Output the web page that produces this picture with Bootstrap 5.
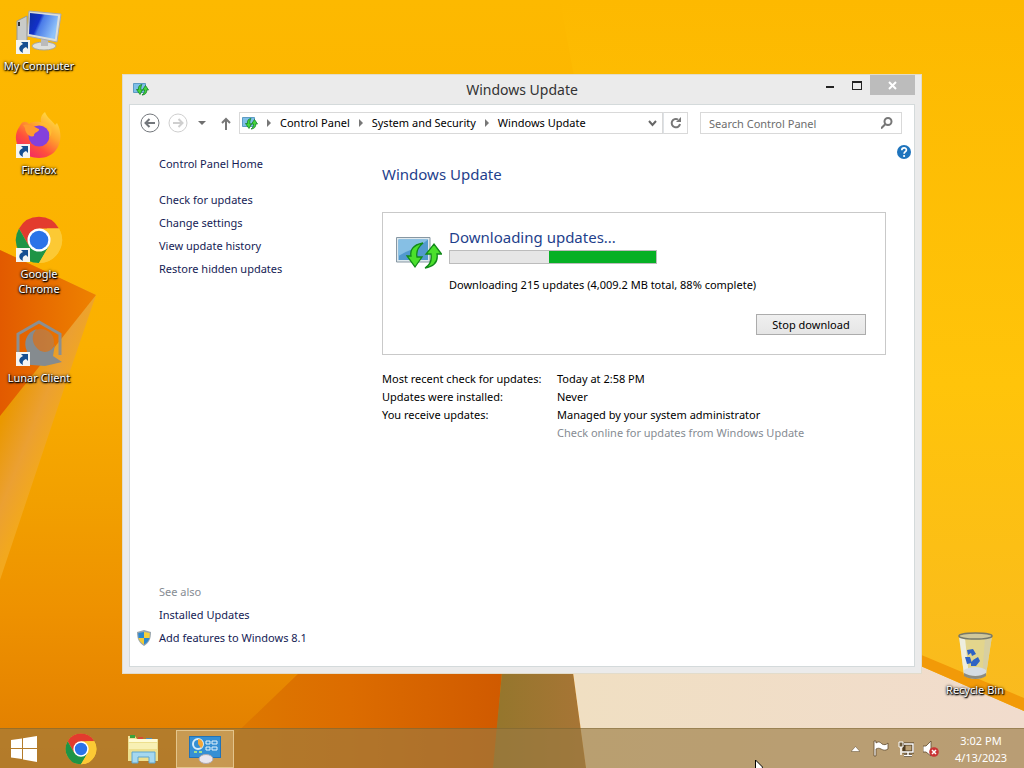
<!DOCTYPE html>
<html lang="en">
<head>
<meta charset="utf-8">
<meta name="viewport" content="width=device-width, initial-scale=1">
<title>Windows Update</title>
<link href="https://cdn.jsdelivr.net/npm/bootstrap@5.3.0/dist/css/bootstrap.min.css" rel="stylesheet">
<style>
  body { font-family: "Noto Sans", "Open Sans", sans-serif; font-size: 11px; line-height: 18px; color: #000; background: #f5a800; }
  a { text-decoration: none; color: #151c55; }
  a:hover { text-decoration: underline; }
  svg { display: block; flex: none; }
  .desktop { min-height: 100vh; overflow: hidden; }
  .wallpaper { position: absolute; inset: 0; width: 100%; height: 100%; }
  .shortcuts { width: 78px; padding-top: 8px; }
  .shortcut { height: 104px; line-height: 15px; color: #fff; text-shadow: 1px 1px 1px #000, 0 1px 2px #000, 0 0 3px #000; }
  .shortcut svg { margin-bottom: 2px; }
  .shortcut, .shortcut:hover { color: #fff; }
  .bin { position: absolute; right: 9px; bottom: 0; width: 80px; height: 96px; }
  .win { position: absolute; left: 122px; top: 74px; right: 102px; bottom: 54px; background: #ebebeb; border: 1px solid #e2dccb; padding: 0 6px 6px; }
  .titlebar { height: 29px; }
  .titlebar h1 { font-size: 14px; font-weight: 400; line-height: 29px; color: #333; padding-right: 20px; }
  .winbtn { border: 0; background: none; padding: 0; height: 20px; width: 27px; }
  .winbtn-close { width: 45px; background: #bcbcbc; }
  .pane { background: #fff; border: 1px solid #d4dadb; }
  .toolbar { height: 36px; padding: 0 12px 0 10px; }
  .plainbtn { border: 0; padding: 0; background: none; }
  .recent { margin: 0 14px 0 9px; }
  .address { border: 1px solid #d9d9d9; height: 22px; padding: 0 5px 0 2px; }
  .address a { color: #000; white-space: nowrap; }
  .crumb-arrow { margin: 0 8px 0 9px; }
  .refresh { border: 1px solid #d9d9d9; border-left: 0; height: 22px; width: 25px; background: #fff; }
  .searchbox { border: 1px solid #d9d9d9; height: 22px; width: 202px; margin-left: 12px; }
  .searchbox input { border: 0; outline: 0; padding: 0 0 0 8px; width: 170px; height: 20px; color: #6d6d6d; }
  .searchbox input::placeholder { color: #6d6d6d; opacity: 1; }
  .side { width: 252px; padding: 14px 0 19px 29px; }
  .side a, .side span { display: block; margin-bottom: 5px; }
  .side .home { margin-bottom: 18px; }
  .side .shielded { margin: 0 0 0 -22px; }
  .help { position: absolute; right: 3px; top: 4px; }
  .main-col { padding: 22px 28px 0 0; }
  .main-col h2, .main-col h3 { font-size: 15px; font-weight: 400; line-height: 22px; color: #1f3f8c; }
  .status { border: 1px solid #c9c9c9; margin-top: 27px; padding: 13px 19px 19px 13px; }
  .status-icon { margin-top: 10px; }
  .status-text { padding-left: 7px; }
  .bar { width: 208px; height: 14px; margin-top: 2px; background: #e6e6e6; border: 1px solid #bcbcbc; border-radius: 0; }
  .bar .progress-bar { background: #06b025; }
  .stop { height: 21px; width: 110px; border: 1px solid #acacac; background: linear-gradient(#f0f0f0, #e5e5e5); padding: 0; line-height: 18px; }
  .facts { margin-top: 15px; }
  .facts th { font-weight: 400; width: 175px; }
  .facts th, .facts td { padding: 0; white-space: nowrap; }
  .facts a, .dim { color: #868c93; }
  .taskbar { height: 40px; background: rgba(153, 122, 65, .64); border-top: 1px solid rgba(110, 90, 40, .4); position: relative; }
  .task { border: 1px solid transparent; background: none; width: 58px; height: 38px; padding: 0; margin-right: 4px; }
  .task-start { width: 48px; margin-right: 4px; }
  .task-open { background: rgba(225, 190, 130, .45); border-color: rgba(240, 215, 165, .7); }
  .tray { padding-right: 15px; gap: 9px; }
  .clock { color: #fff; line-height: 17px; width: 56px; margin-left: 5px; }
  .pointer { position: absolute; left: 755px; bottom: 0; }
</style>
</head>
<body>
<div class="desktop d-flex flex-column position-relative">

  <svg class="wallpaper" viewBox="0 0 1024 768" preserveAspectRatio="none" aria-hidden="true">
    <defs>
      <linearGradient id="sky" x1="0" y1="0" x2="0" y2="1"><stop offset="0" stop-color="#fdb900"/><stop offset=".45" stop-color="#fbb000"/><stop offset=".65" stop-color="#f2a000"/><stop offset=".8" stop-color="#ee9100"/><stop offset="1" stop-color="#e07c00"/></linearGradient>
      <linearGradient id="rightSky" x1="0" y1="0" x2="0" y2="1"><stop offset="0" stop-color="#fdb900"/><stop offset=".5" stop-color="#ffc40a"/><stop offset="1" stop-color="#f8b824"/></linearGradient>
      <linearGradient id="flap" x1="0" y1="0" x2="1" y2="0"><stop offset="0" stop-color="#e25a00"/><stop offset="1" stop-color="#ee8200"/></linearGradient>
      <linearGradient id="fold" gradientUnits="userSpaceOnUse" x1="5" y1="410" x2="55" y2="430"><stop offset="0" stop-color="#ea9800"/><stop offset=".6" stop-color="#eba032"/><stop offset="1" stop-color="#f2a81e"/></linearGradient>
      <linearGradient id="ember" x1="0" y1="0" x2="1" y2="0"><stop offset="0" stop-color="#de7c00"/><stop offset=".5" stop-color="#dc6c00"/><stop offset="1" stop-color="#d05a00"/></linearGradient>
      <linearGradient id="olive" x1="0" y1="0" x2="1" y2="0"><stop offset="0" stop-color="#94762c"/><stop offset="1" stop-color="#a87536"/></linearGradient>
      <linearGradient id="sand" x1="0" y1="0" x2="1" y2="0"><stop offset="0" stop-color="#f0dfc2"/><stop offset="1" stop-color="#f1dccd"/></linearGradient>
    </defs>
    <rect width="1024" height="768" fill="url(#sky)"/>
    <path d="M560 0H1024V768H700Z" fill="url(#rightSky)"/>
    <path d="M0 250L96 295L65 386L0 580Z" fill="url(#fold)"/>
    <path d="M0 250L96 295L0 416Z" fill="url(#flap)"/>
    <path d="M300 672H502L494 768H200Z" fill="url(#ember)"/>
    <path d="M502 672H573L586 768H493Z" fill="url(#olive)"/>
    <path d="M573 672L700 657H900L1024 711V768H586Z" fill="url(#sand)"/>
    <path d="M900 646L1024 698V711L900 657Z" fill="#f29a08"/>
  </svg>

  <svg width="0" height="0" class="position-absolute" aria-hidden="true">
    <defs>
      <symbol id="arrow" viewBox="0 0 14 14"><path d="M0 0H14V14H0Z" fill="#f5f5f2"/><path d="M5 2H12V9L10 7C7 8 6 10 7 13C2 11 2 6 7 4Z" fill="#174f91"/></symbol>
      <symbol id="chrome" viewBox="0 0 48 48"><circle cx="24" cy="24" r="23" fill="#fcc934"/><path d="M4 12.500A23 23 0 0 1 44 12.500H24L14 30Z" fill="#e33b2e"/><path d="M4 12.500L14 30L24 35L34 30L24 47A23 23 0 0 1 4 12.500Z" fill="#1e9446"/><path d="M44 12.500A23 23 0 0 1 24 47L34 30L32 12.500Z" fill="#fcc934"/><circle cx="24" cy="24" r="11.500" fill="#fff"/><circle cx="24" cy="24" r="9.300" fill="#2b73e8"/></symbol>
      <symbol id="update" viewBox="0 0 46 34"><path d="M.5 1.500H34V26H.5Z" fill="#dfe9ee" stroke="#8797a3"/><path d="M2.500 3.500H32V24H2.500Z" fill="#5299cf"/><path d="M2.500 3.500H32C22 12 12 14 2.500 20Z" fill="#86bfe4"/><path d="M27 7C16 9 14 15 15 20H11L19 31L26 21H21C20 16 22 11 27 7Z" fill="#4be02c" stroke="#128a1a" stroke-width="1.300"/><path d="M29 32C40 30 42 24 41 18H45.500L38 8L30 18H35C36 24 34 29 29 32Z" fill="#4be02c" stroke="#128a1a" stroke-width="1.300"/></symbol>
      <symbol id="update-small" viewBox="0 0 16 13"><path d="M.5 .5H12.500V9.500H.5Z" fill="#7fbfe8" stroke="#5d9cc4"/><path d="M9 1.500C6 2 5 4 5.500 6.500H3.500L7 11.500L9.500 7H8C7.500 5 8 3 9 1.500Z" fill="#43d63a" stroke="#14802a" stroke-width=".8"/><path d="M9 12C12.500 12 14 9.500 13.700 7H15.500L12.500 2.500L9.500 7H11.500C11.500 9 11 11 9 12Z" fill="#43d63a" stroke="#14802a" stroke-width=".8"/></symbol>
    </defs>
  </svg>

  <main class="flex-grow-1 position-relative">
    <nav class="shortcuts d-flex flex-column" aria-label="Desktop">
      <a href="#" class="shortcut d-flex flex-column align-items-center text-center">
        <svg width="48" height="48" viewBox="0 0 48 48"><defs><linearGradient id="scr" x1="0" y1="0" x2="1" y2=".4"><stop offset="0" stop-color="#0c2ea0"/><stop offset=".4" stop-color="#1230c8"/><stop offset=".5" stop-color="#4a7be8"/><stop offset="1" stop-color="#8fc2fa"/></linearGradient></defs><path d="M2 13L12 8V38L2 33Z" fill="#c9cbc8" stroke="#989a94"/><path d="M3 14H5V18H3Z" fill="#333"/><ellipse cx="29" cy="38" rx="12" ry="4" fill="#dfe0dc" stroke="#a8a79c"/><path d="M26 30H33V38H26Z" fill="#bbb"/><path d="M14 3L46 6L42 34L12 28Z" fill="#dcdeda" stroke="#aaa"/><path d="M15 5L43 8L40 31L14 26Z" fill="url(#scr)"/><use href="#arrow" x="1" y="32" width="14" height="14"/></svg>
        <span>My Computer</span>
      </a>
      <a href="#" class="shortcut d-flex flex-column align-items-center text-center">
        <svg width="48" height="48" viewBox="0 0 48 48"><defs><linearGradient id="fx" x1=".9" y1="0" x2=".2" y2="1"><stop offset="0" stop-color="#ffe94a"/><stop offset=".4" stop-color="#ffa52c"/><stop offset=".7" stop-color="#ff4f3c"/><stop offset="1" stop-color="#ef2070"/></linearGradient></defs><path d="M6 12C8 9 12 9 14 12C18 9 22 10 26 10C25 6 27 2 30 0C32 6 38 9 40 13L42 11C50 25 44 46 24 46C7 46-4 30 3 17Z" fill="url(#fx)"/><circle cx="24" cy="24" r="10.500" fill="#8440dc"/><path d="M8 13C14 11 20 15 24 17C25 20 18 20 19 24C14 26 10 20 10 16Z" fill="#ff9a2e"/><path d="M22 13C31 11 37 17 34 26C39 19 37 12 29 10Z" fill="#ffbd32"/><use href="#arrow" x="1" y="32" width="14" height="14"/></svg>
        <span>Firefox</span>
      </a>
      <a href="#" class="shortcut d-flex flex-column align-items-center text-center">
        <svg width="48" height="48" viewBox="0 0 48 48"><use href="#chrome" width="48" height="48"/><use href="#arrow" x="1" y="32" width="14" height="14"/></svg>
        <span>Google<br>Chrome</span>
      </a>
      <a href="#" class="shortcut d-flex flex-column align-items-center text-center">
        <svg width="48" height="48" viewBox="0 0 48 48"><path d="M3 36V14L24 2L45 14V35" fill="none" stroke="#8b8f91" stroke-width="3"/><circle cx="26" cy="22" r="13" fill="#8b8f91" opacity=".4"/><path d="M22 9C11 12 8 23 12 31L10 37L4 44L30 46L47 42L38 36L40 24C36 34 26 34 21 27C16 21 17 13 22 9Z" fill="#858b8f"/><use href="#arrow" x="1" y="32" width="14" height="14"/></svg>
        <span>Lunar Client</span>
      </a>
    </nav>

    <a href="#" class="shortcut bin d-flex flex-column align-items-center text-center">
      <svg width="48" height="48" viewBox="0 0 48 48"><path d="M8 4L13 43C19 48 30 48 35 43L41 4Z" fill="#e3d58c"/><path d="M8 4L13 43L18 45L14 6Z" fill="#eeeede"/><path d="M34 6L31 45L35 43L41 4Z" fill="#d7cfa2"/><path d="M13 38C19 34 30 34 35 38V43C30 48 19 48 13 43Z" fill="#d5dce3"/><path d="M13 41C20 45 29 45 35 41V44C30 48 19 48 13 44Z" fill="#8c8b80"/><ellipse cx="24.500" cy="4" rx="16.500" ry="3" fill="#cfc79c" stroke="#77796a" stroke-width="1.500"/><path d="M16 18L22 17L25 22L21 24L20 21L17 23ZM14 25L19 25L21 31L16 32ZM22 28L27 25L29 29L25 34L20 34L20 31Z" fill="#2f63c4"/></svg>
      <span>Recycle Bin</span>
    </a>

    <section class="win d-flex flex-column" aria-label="Windows Update">
      <header class="titlebar position-relative d-flex">
        <svg class="mt-2 ms-1" width="16" height="13"><use href="#update-small" width="16" height="13"/></svg>
        <h1 class="flex-grow-1 text-center mb-0">Windows Update</h1>
        <div class="d-flex position-absolute end-0 top-0">
          <button type="button" class="winbtn" aria-label="Minimize"><svg class="mx-auto" width="10" height="10"><path d="M1 6H9V8H1Z" fill="#222"/></svg></button>
          <button type="button" class="winbtn" aria-label="Maximize"><svg class="mx-auto" width="10" height="9"><path d="M0 0H10V9H0ZM1 2V8H9V2Z" fill="#222" fill-rule="evenodd"/></svg></button>
          <button type="button" class="winbtn winbtn-close" aria-label="Close"><svg class="mx-auto" width="9" height="9"><path d="M1 1L8 8M8 1L1 8" stroke="#fff" stroke-width="2"/></svg></button>
        </div>
      </header>

      <div class="pane flex-grow-1 d-flex flex-column">
        <div class="toolbar d-flex align-items-center">
          <button type="button" class="plainbtn me-2" aria-label="Back"><svg width="20" height="20" viewBox="0 0 20 20" fill="none" stroke="#73777c"><circle cx="10" cy="10" r="9"/><path d="M15 10H6M9.500 6L5.500 10L9.500 14" stroke-width="2"/></svg></button>
          <button type="button" class="plainbtn" aria-label="Forward"><svg width="20" height="20" viewBox="0 0 20 20" fill="none" stroke="#cfcfcf"><circle cx="10" cy="10" r="9"/><path d="M5 10H14M10.500 6L14.500 10L10.500 14" stroke-width="2"/></svg></button>
          <button type="button" class="plainbtn recent" aria-label="Recent locations"><svg width="10" height="6"><path d="M1 1H9L5 5Z" fill="#6f6f6f"/></svg></button>
          <button type="button" class="plainbtn me-2" aria-label="Up"><svg width="10" height="13" fill="none" stroke="#777" stroke-width="2"><path d="M5 13V2M1 6L5 2L9 6"/></svg></button>
          <nav class="address flex-grow-1 d-flex align-items-center" aria-label="Address">
            <svg width="16" height="13"><use href="#update-small" width="16" height="13"/></svg>
            <svg class="crumb-arrow" width="5" height="8"><path d="M0 0L4 4L0 8Z" fill="#777"/></svg>
            <a href="#">Control Panel</a>
            <svg class="crumb-arrow" width="5" height="8"><path d="M0 0L4 4L0 8Z" fill="#777"/></svg>
            <a href="#">System and Security</a>
            <svg class="crumb-arrow" width="5" height="8"><path d="M0 0L4 4L0 8Z" fill="#777"/></svg>
            <a href="#">Windows Update</a>
            <button type="button" class="plainbtn ms-auto" aria-label="Previous locations"><svg width="9" height="7"><path d="M1 1L4.500 5L8 1" fill="none" stroke="#666" stroke-width="2"/></svg></button>
          </nav>
          <button type="button" class="refresh p-0 border-start" aria-label="Refresh"><svg class="mx-auto" width="12" height="12" fill="none" stroke="#777" stroke-width="2"><path d="M8 2.500A4.200 4.200 0 1 0 10 7"/><path d="M11 0V5H6Z" fill="#777" stroke="none"/></svg></button>
          <div class="searchbox d-flex align-items-center">
            <input type="text" placeholder="Search Control Panel" aria-label="Search Control Panel">
            <svg class="ms-auto me-2" width="12" height="12" fill="none" stroke="#777" stroke-width="2"><circle cx="7" cy="4.500" r="3.500"/><path d="M4.500 7L0 11.500"/></svg>
          </div>
        </div>

        <div class="flex-grow-1 d-flex position-relative">
          <nav class="side flex-shrink-0 d-flex flex-column" aria-label="Tasks">
            <a href="#" class="home">Control Panel Home</a>
            <a href="#">Check for updates</a>
            <a href="#">Change settings</a>
            <a href="#">View update history</a>
            <a href="#">Restore hidden updates</a>
            <span class="dim mt-auto">See also</span>
            <a href="#">Installed Updates</a>
            <a href="#" class="shielded d-flex align-items-center">
              <svg class="me-2" width="14" height="16" viewBox="0 0 14 16"><path d="M7 0L14 2C14 9 12 13 7 16C2 13 0 9 0 2Z" fill="#9aa6ae"/><path d="M7 2V8H1.500L1.300 3Z" fill="#2b87cf"/><path d="M7 2L12.700 3L12.500 8H7Z" fill="#f6d13c"/><path d="M1.500 8H7V14.500C3.500 12.500 2 10 1.500 8Z" fill="#f1ca35"/><path d="M7 8H12.500C12 10 10.500 12.500 7 14.500Z" fill="#2b87cf"/></svg>Add features to Windows 8.1</a>
          </nav>

          <div class="main-col flex-grow-1">
            <h2 class="mb-0">Windows Update</h2>
            <section class="status">
              <div class="d-flex">
                <svg class="status-icon" width="46" height="34"><use href="#update" width="46" height="34"/></svg>
                <div class="status-text">
                  <h3 class="mb-0">Downloading updates...</h3>
                  <div class="progress bar justify-content-end" role="progressbar" aria-label="Download progress"><div class="progress-bar" style="width:52%"></div></div>
                  <p class="mb-0 mt-2 pt-1">Downloading 215 updates (4,009.2 MB total, 88% complete)</p>
                </div>
              </div>
              <div class="text-end mt-3"><button type="button" class="stop mt-1">Stop download</button></div>
            </section>
            <table class="facts">
              <tbody>
                <tr><th scope="row">Most recent check for updates:</th><td>Today at 2:58 PM</td></tr>
                <tr><th scope="row">Updates were installed:</th><td>Never</td></tr>
                <tr><th scope="row">You receive updates:</th><td>Managed by your system administrator</td></tr>
                <tr><th></th><td><a href="#">Check online for updates from Windows Update</a></td></tr>
              </tbody>
            </table>
          </div>
          <button type="button" class="plainbtn help" aria-label="Help"><svg width="14" height="14" viewBox="0 0 14 14"><circle cx="7" cy="7" r="7" fill="#1e74bd"/><path d="M4.800 5.200C4.800 2 9.400 2.200 9.400 4.900C9.400 6.700 7.100 6.600 7.100 8.800" fill="none" stroke="#fff" stroke-width="1.700"/><circle cx="7.100" cy="11" r="1.100" fill="#fff"/></svg></button>
        </div>
      </div>
    </section>
  </main>

  <footer class="taskbar d-flex align-items-center">
    <button type="button" class="task task-start" aria-label="Start"><svg class="mx-auto" width="28" height="26" viewBox="0 0 28 26" fill="#fff"><path d="M1 4L12 2.500V12H1ZM13 2.300L27 0V12H13ZM1 13H12V23L1 21.500ZM13 13H27V26L13 23.500Z"/></svg></button>
    <button type="button" class="task" aria-label="Google Chrome"><svg class="mx-auto" width="32" height="32"><use href="#chrome" width="32" height="32"/></svg></button>
    <button type="button" class="task" aria-label="File Explorer"><svg class="mx-auto" width="32" height="32" viewBox="0 0 32 32"><path d="M1 3H8L10 6H31V28H1Z" fill="#f1e29a"/><path d="M3 2H8V5H3Z" fill="#3ba23c"/><path d="M11 4H16V7H11Z" fill="#d84c35"/><path d="M19 5H25V8H19Z" fill="#4c8fbe"/><path d="M2 6H30V9H2Z" fill="#fffbd6"/><path d="M1 9H31V28H1Z" fill="#eddf8e"/><path d="M2 10H30V16H2Z" fill="#f8f0b4"/><path d="M5 30V19H28V30H22V24H11V30Z" fill="#a6d8ef" stroke="#5fa6cf"/></svg></button>
    <button type="button" class="task task-open" aria-label="Control Panel"><svg class="mx-auto" width="32" height="30" viewBox="0 0 32 30"><path d="M0 2H32V24H0Z" fill="#2173b8"/><path d="M1 3H31V23H1Z" fill="#358fd4"/><circle cx="9" cy="10" r="5" fill="none" stroke="#d7edfa" stroke-width="2"/><path d="M9 10V5A5 5 0 0 1 12 14Z" fill="#f4a638"/><path d="M17 7H21V10H17ZM23 7H28V10H23ZM17 13H21V16H17ZM23 13H28V16H23Z" fill="none" stroke="#e4f3fb"/><path d="M5 18H8M10 18H13" stroke="#9fe08b" stroke-width="2"/><ellipse cx="17" cy="25" rx="7" ry="4.500" fill="#e9e6ef" stroke="#b1a9ad"/></svg></button>
    <div class="tray d-flex align-items-center ms-auto">
      <svg width="9" height="6"><path d="M0 5.500H9L4.500 .5Z" fill="#fff" stroke="#5f4a2e" stroke-width=".5"/></svg>
      <svg class="ms-1" width="16" height="17" viewBox="0 0 16 17"><path d="M1 1H3V3C6 1 7 2 9 4C11 5 13 5 15 3V9C12 11 10 10 8 9C6 8 5 8 3 9V16H1Z" fill="#fff" stroke="#5f4a2e" stroke-width=".8"/></svg>
      <svg width="16" height="16" viewBox="0 0 16 16" fill="none"><path d="M6 3H15V11H6ZM10 11V14M6 14.500H14" stroke="#4d3b22" stroke-width="3"/><path d="M6 3H15V11H4M10 11V14M6 14.500H14M3 6V14" stroke="#fff" stroke-width="1.500"/><path d="M1 1H5V6H1Z" fill="#6c5a3b" stroke="#fff"/></svg>
      <svg width="16" height="16" viewBox="0 0 16 16"><path d="M0 5H3L8 0V15L3 11H0Z" fill="#fff" stroke="#5f4a2e" stroke-width=".8"/><circle cx="11" cy="11" r="4.800" fill="#c93434"/><path d="M9 9L13 13M13 9L9 13" stroke="#fff" stroke-width="1.500"/></svg>
      <div class="clock text-center"><div>3:02 PM</div><div>4/13/2023</div></div>
    </div>
    <svg class="pointer" width="8" height="8"><path d="M.5 0V12L8 7.500Z" fill="#fff" stroke="#000"/></svg>
  </footer>
</div>
<script src="https://cdn.jsdelivr.net/npm/bootstrap@5.3.0/dist/js/bootstrap.bundle.min.js"></script>
</body>
</html>
